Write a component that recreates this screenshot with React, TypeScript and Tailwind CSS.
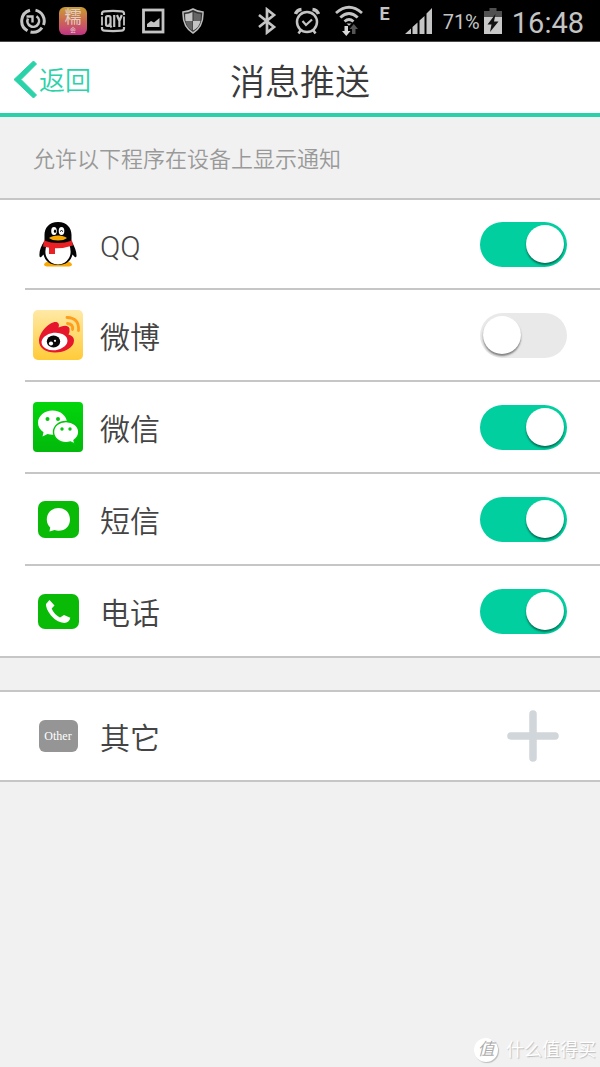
import { useState, type ReactNode } from 'react';

function StatusBar() {
  return (
    <div className="h-[42px] bg-black border-b border-[#4a4a4a] flex items-center justify-between pl-[13px] pr-4 text-[#c4c4c4] font-normal">
      <div className="flex items-center">
        <span className="w-10 flex justify-center">
          <svg width="26" height="26" viewBox="0 0 26 26" fill="none" stroke="#c4c4c4" strokeWidth="3">
            <path d="M10 2.200A11.200 11.200 0 0 0 7.500 22.800M10.500 24A11.200 11.200 0 0 0 22 19.700M23.500 17A11.200 11.200 0 0 0 15.500 2.100" />
            <path d="M16.500 8.200A5.800 5.800 0 1 1 8 10.500" strokeWidth="2.600" />
            <path d="M12.500 14.500V8.500H6.500" strokeWidth="2.400" />
          </svg>
        </span>
        <span className="w-10 flex justify-center">
          <span className="w-7 h-7 rounded-md bg-linear-to-b from-[#c99c2c] via-[#cc6650] to-[#c22f86] flex flex-col items-center text-[#e0d0cc]">
            <span className="text-[17px] leading-5">糯</span>
            <span className="text-[6px] leading-[6px]">会</span>
          </span>
        </span>
        <span className="w-10 flex justify-center">
          <svg width="26" height="24" viewBox="0 0 26 24" fill="none" stroke="#c4c4c4" strokeWidth="2.200">
            <path d="M2 6V4.500Q2 2.500 4.500 2.300Q13 1.600 21.500 2.300Q24 2.500 24 4.500V6M2 18v1.500Q2 21.500 4.500 21.700Q13 22.400 21.500 21.700Q24 21.500 24 19.500V18" />
            <path d="M2 7.500v9M24 7.500v9" strokeWidth="1.800" />
            <rect x="6" y="7.200" width="4.500" height="9.600" rx="1.500" />
            <path d="M9 14.500l2.500 4M14.200 6v12M17 6l2.400 6 2.400-6M19.400 11.500V18" />
          </svg>
        </span>
        <span className="w-10 flex justify-center">
          <svg width="24" height="26" viewBox="0 0 24 26">
            <rect x="2.500" y="2" width="19.500" height="22" fill="none" stroke="#c4c4c4" strokeWidth="2.800" />
            <path d="M6 19v-3l4-3 3 1.500 5.500-4.500v9z" fill="#c4c4c4" />
          </svg>
        </span>
        <span className="w-10 flex justify-center">
          <svg width="22" height="26" viewBox="0 0 22 26">
            <path d="M11 1Q16 4 21 4Q21.500 19 11 25Q.5 19 1 4Q6 4 11 1z" fill="#333" stroke="#bdbdbd" strokeWidth="1.500" />
            <path d="M10.500 4v9H3.500Q3 9 3.200 6Q7 6 10.500 4zM11 13h7.500Q17 20 11 22.500z" fill="#c4c4c4" />
            <path d="M11.500 4Q15 6 18.800 6Q19 9 18.500 13h-7zM3.500 13h7v9.500Q5 20 3.500 13z" fill="#666" />
          </svg>
        </span>
      </div>
      <div className="flex items-center">
        <span className="w-10 flex justify-center">
          <svg width="20" height="28" viewBox="0 0 20 28" fill="none" stroke="#c4c4c4" strokeWidth="2.700">
            <path d="M2 8l15 12-7 5.500V2.500L17 8 2 20" />
          </svg>
        </span>
        <span className="w-10 flex justify-center">
          <svg width="26" height="28" viewBox="0 0 26 28" fill="none" stroke="#c4c4c4">
            <circle cx="13" cy="15" r="10" strokeWidth="2.500" />
            <path d="M8.500 14l3.500 4 6-5.500" strokeWidth="2.200" />
            <path d="M1.500 7Q3 3 7.500 2.500M24.500 7Q23 3 18.500 2.500" strokeWidth="3.500" />
            <path d="M6.500 23.500l-2 3M19.500 23.500l2 3" strokeWidth="2.500" />
          </svg>
        </span>
        <span className="w-11 flex justify-center">
          <svg width="28" height="32" viewBox="0 0 28 32" fill="none" stroke="#c4c4c4" strokeWidth="2.800">
            <path d="M1 8Q14-3.500 27 8M5.300 12.500Q14 4.500 22.700 12.500M9.500 16.500Q14 12.500 18.500 16.500" />
            <path d="M11.500 18.500h5L14 20.800z" fill="#c4c4c4" stroke="none" />
            <path d="M9.500 21h3.500v5h2.500l-4.200 5-4.300-5h2.500z" fill="#d8d8d8" stroke="none" />
            <path d="M17 29h3.500v-5H23l-4.200-5-4.300 5H17z" fill="#555" stroke="none" />
          </svg>
        </span>
        <span className="w-7 pb-[14px] text-center font-bold text-[18px] leading-4">E</span>
        <span className="w-10 flex justify-center">
          <svg width="28" height="28" viewBox="0 0 28 28" fill="#c4c4c4">
            <path d="M0 27l6-5.500V27zM7.500 20l5-4.500V27h-5zM14.500 13.500l5-4.500v18h-5zM21.500 6.500L27 1v26h-5.500z" />
          </svg>
        </span>
        <span className="ml-1 pt-[2px] text-[20px]">71%</span>
        <svg className="ml-1" width="18" height="28" viewBox="0 0 18 28">
          <path d="M0 4h5.500V1h7v3H18v7H0z" fill="#505050" />
          <path d="M0 10h18v17H0z" fill="#c8c8c8" />
          <path d="M11.500 7L3.500 17.500h4L6 25l8.500-10.500h-4.500z" fill="#111" />
        </svg>
        <span className="ml-[10px] pt-1 text-[29px] leading-8">16:48</span>
      </div>
    </div>
  );
}

function QQIcon() {
  return (
    <svg width="38" height="46" viewBox="0 0 38 46">
      <path d="M5 43.500q1-3.500 8-3.500l6 2 6-2q7 0 8 3.500 0 2-5 2H10q-5 0-5-2z" fill="#f8a908" />
      <path d="M19 1C10 1 5.500 7 5.500 14v6C2 25 0 30 .5 35q.5 3 4 -1.500C6 40 11 44 19 44s13-4 14.500-10.500q3.500 4.500 4 1.500.5-5-5-15v-6C32.500 7 28 1 19 1z" fill="#050505" />
      <path d="M7.500 24h23q2.500 8-.5 13-3.500 6-11 6.500-7.500-.5-11-6.500-3-5-.5-13z" fill="#fff" />
      <path d="M5 19.500q14 5 28 0l1 5q-15 5-30 1z" fill="#e92024" />
      <path d="M10 25h6v8h-6z" fill="#e92024" />
      <ellipse cx="15" cy="10" rx="2.800" ry="4" fill="#fff" />
      <ellipse cx="22.500" cy="10" rx="2.800" ry="4" fill="#fff" />
      <ellipse cx="16" cy="10.300" rx="1.100" ry="1.700" fill="#000" />
      <path d="M21 10.500q1.500-2 3 0" stroke="#000" fill="none" />
      <path d="M10 17q3-2.500 9-2.500t9 2.500q-3 2.500-9 2.500T10 17z" fill="#f8a908" />
    </svg>
  );
}

function WeiboIcon() {
  return (
    <svg width="50" height="50" viewBox="0 0 50 50">
      <defs>
        <linearGradient id="weibo-bg" x1="0" y1="0" x2="0" y2="1">
          <stop offset="0" stopColor="#ffe9a6" />
          <stop offset="1" stopColor="#ffcb38" />
        </linearGradient>
      </defs>
      <rect width="50" height="50" rx="5" fill="url(#weibo-bg)" />
      <path d="M6 31C6 22 17 11 23.500 12Q27 13 25.500 17.500Q34.500 13.500 36.500 18.500Q37 22 35.500 24.500Q41 26 41 30.500C41 38 31 42.500 22 42.500C13 42.500 6 38 6 31z" fill="#e6162d" />
      <ellipse cx="21.500" cy="31.500" rx="13" ry="8.700" transform="rotate(-7 21.500 31.500)" fill="#fff" />
      <ellipse cx="20.500" cy="31.500" rx="6.700" ry="6" fill="#080808" />
      <circle cx="18" cy="33.500" r="2.100" fill="#fff" />
      <circle cx="22" cy="30.800" r="1.100" fill="#fff" />
      <path d="M34 7.500Q46.500 8 45.500 20.500M34.500 13.500Q40.500 14 39.500 19.500" fill="none" stroke="#ff9d1d" strokeWidth="2.800" strokeLinecap="round" />
    </svg>
  );
}

function WeChatIcon() {
  return (
    <svg width="50" height="50" viewBox="0 0 50 50">
      <defs>
        <linearGradient id="wechat-bg" x1="0" y1="0" x2="0" y2="1">
          <stop offset="0" stopColor="#02d60b" />
          <stop offset="1" stopColor="#02b90b" />
        </linearGradient>
      </defs>
      <rect width="50" height="50" rx="4" fill="url(#wechat-bg)" />
      <path d="M19.500 8.500C11.500 8.500 5 14 5 20.800c0 4 2 7 5.500 9.500L9.500 34.500l5-2.500q2.500.8 5 .8C27.500 32.800 34 27.500 34 20.800S27.500 8.500 19.500 8.500z" fill="#fff" />
      <path d="M33 19.500c-7 0-12.500 4.700-12.500 10.500S26 40.700 33 40.700q2 0 4.500-.7l4.500 2.200-1-3.900q4.800-3.300 4.800-8.300C45.800 24.200 40 19.500 33 19.500z" fill="#fff" stroke="#02c50b" strokeWidth="1.400" />
      <g fill="#02c80b">
        <circle cx="14.500" cy="17" r="2" />
        <circle cx="25" cy="17" r="2" />
        <circle cx="29" cy="27" r="1.700" />
        <circle cx="37" cy="27" r="1.700" />
      </g>
    </svg>
  );
}

function SmsIcon() {
  return (
    <svg width="41" height="37" viewBox="0 0 41 37">
      <rect width="41" height="37" rx="7" fill="#09bb07" />
      <path d="M20.500 7C13.500 7 8.800 12 8.800 18.500q0 4.500 3.400 8L11.500 30.500l5-1.500q2 .8 4 .8C27.500 29.800 32 25 32 18.500S27.500 7 20.500 7z" fill="#fff" />
    </svg>
  );
}

function PhoneIcon() {
  return (
    <svg width="41" height="35" viewBox="0 0 41 35">
      <rect width="41" height="35" rx="7" fill="#09bb07" />
      <path d="M11.500 6l5 5.500-2.800 3q2 5.500 8.300 9l4-2.500 6.300 2.700q-1 5-6 5.300Q19 28.500 13 21.500Q7.500 14.500 8 10z" fill="#fff" />
    </svg>
  );
}

function OtherIcon() {
  return (
    <span className="w-[39px] h-8 rounded-md bg-[#959595] flex items-center justify-center text-white text-[12px] font-['Liberation_Serif',serif]">
      Other
    </span>
  );
}

function Switch({ id, checked, onChange }: { id: string; checked: boolean; onChange: () => void }) {
  return (
    <input
      id={id}
      type="checkbox"
      role="switch"
      checked={checked}
      onChange={onChange}
      className="appearance-none w-[87px] h-[45px] px-[3px] rounded-full bg-[#e9e9e9] checked:bg-[#02cf9f] flex items-center cursor-pointer before:block before:size-[38px] before:rounded-full before:bg-white before:shadow-[0_2px_2px_rgba(0,0,0,0.45)] checked:before:ml-auto"
    />
  );
}

const apps: { id: string; name: string; icon: ReactNode }[] = [
  { id: 'qq', name: 'QQ', icon: <QQIcon /> },
  { id: 'weibo', name: '微博', icon: <WeiboIcon /> },
  { id: 'wechat', name: '微信', icon: <WeChatIcon /> },
  { id: 'sms', name: '短信', icon: <SmsIcon /> },
  { id: 'phone', name: '电话', icon: <PhoneIcon /> },
];

export default function App() {
  const [enabled, setEnabled] = useState<Record<string, boolean>>({
    qq: true,
    weibo: false,
    wechat: true,
    sms: true,
    phone: true,
  });

  const toggle = (id: string) => setEnabled({ ...enabled, [id]: !enabled[id] });

  return (
    <div className="min-h-screen flex flex-col bg-[#f1f1f1] text-[#444] font-[350] font-[Roboto,'Noto_Sans_CJK_SC',sans-serif]">
      <StatusBar />

      <header className="h-[75px] pt-1 bg-white border-b-4 border-[#2bd0aa] grid grid-cols-[1fr_auto_1fr] items-center px-[14px]">
        <a href="#back" className="flex items-center gap-[2px] text-[26px] text-[#2bd2a9]">
          <svg width="23" height="37" viewBox="0 0 23 37" fill="currentColor">
            <path d="M19.500 0L22.500 3 7 18.500 22.500 34l-3 3L0 18.500z" stroke="currentColor" strokeWidth="1" />
          </svg>
          <span className="pt-1">返回</span>
        </a>
        <h1 className="pt-2 text-[35px] leading-10 font-[350] text-[#3a3a3a]">消息推送</h1>
      </header>

      <main>
        <p className="h-[81px] px-[33px] pt-1 flex items-center text-[22px] text-[#999]">
          允许以下程序在设备上显示通知
        </p>

        <ul className="bg-white border-y-2 border-[#c6c6c6]">
          {apps.map((app) => (
            <li key={app.id} className="pl-[25px] group">
              <div className="h-23 group-first:h-[90px] group-last:h-[90px] border-b-2 group-last:border-b-0 border-[#c6c6c6] flex items-center pr-[33px]">
                <span className="w-[66px] flex justify-center">{app.icon}</span>
                <label htmlFor={app.id} className="flex-1 pl-[9px] pt-1 text-[30px]">
                  {app.name}
                </label>
                <Switch id={app.id} checked={enabled[app.id]} onChange={() => toggle(app.id)} />
              </div>
            </li>
          ))}
        </ul>

        <div className="mt-8 h-23 bg-white border-y-2 border-[#c6c6c6] flex items-center pl-[25px] pr-10">
          <span className="w-[66px] flex justify-center">
            <OtherIcon />
          </span>
          <span className="flex-1 pl-[9px] pt-1 text-[30px]">其它</span>
          <button aria-label="添加">
            <svg width="54" height="54" viewBox="0 0 54 54" stroke="#d1d6da" strokeWidth="7.500" strokeLinecap="round">
              <path d="M27 5v44M5 27h44" />
            </svg>
          </button>
        </div>
      </main>

      <footer className="mt-auto pb-1 pr-1 flex items-center justify-end gap-2 text-white text-[18px] [text-shadow:1px_1px_1px_#bbb]">
        <span className="size-6 rounded-full bg-white shadow-[1px_1px_1px_#bbb] flex items-center justify-center text-[17px] text-[#aaa] italic [text-shadow:none]">
          值
        </span>
        什么值得买
      </footer>
    </div>
  );
}
